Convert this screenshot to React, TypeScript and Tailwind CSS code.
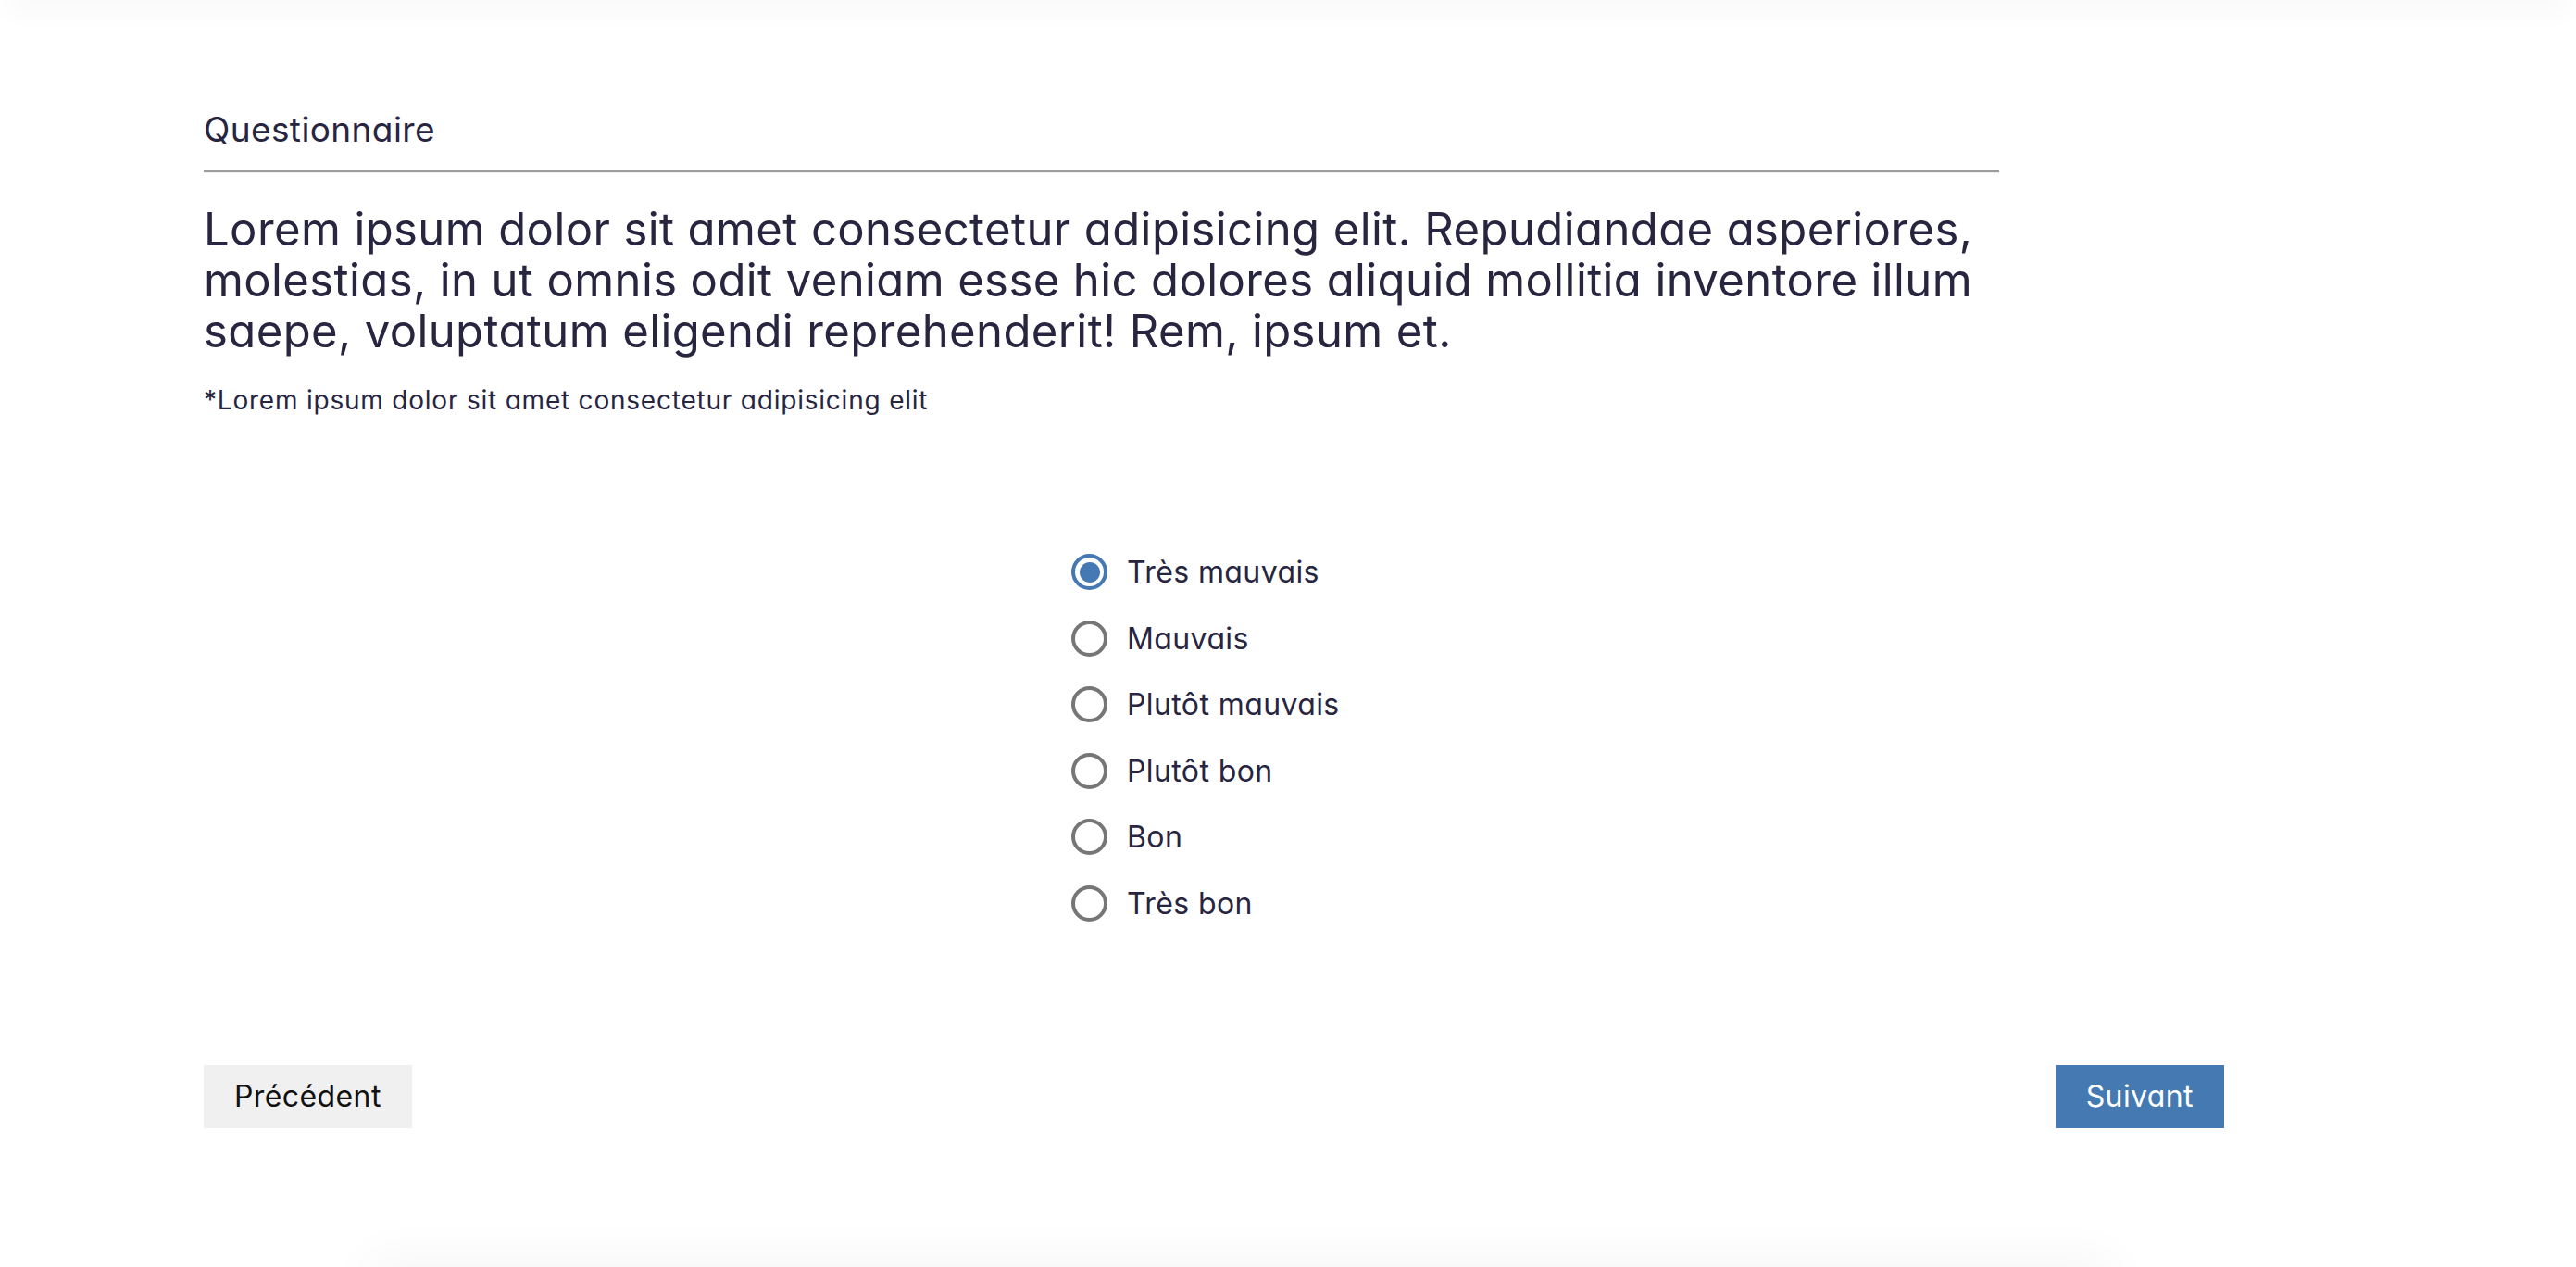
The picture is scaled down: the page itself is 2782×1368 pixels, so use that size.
import { useState } from "react";

const options = [
  "Très mauvais",
  "Mauvais",
  "Plutôt mauvais",
  "Plutôt bon",
  "Bon",
  "Très bon",
];

function Radio({ checked }: { checked: boolean }) {
  return (
    <span
      className={`flex h-[39px] w-[39px] shrink-0 items-center justify-center rounded-full border-[4px] ${
        checked ? "border-[#4479b3]" : "border-[#767676]"
      }`}
    >
      {checked && <span className="h-[22px] w-[22px] rounded-full bg-[#4479b3]" />}
    </span>
  );
}

export default function App() {
  const [answer, setAnswer] = useState(0);

  return (
    <div className="min-h-screen overflow-hidden bg-white font-['Inter','Liberation_Sans',sans-serif] tracking-wide text-[#27253f] [font-feature-settings:'cv11']">
      <div className="mx-[20px] h-0 shadow-[0_0_30px_12px_rgba(0,0,0,0.035)]" />

      <main className="pl-[220px] pr-[380px]">
        <section className="w-[1939px]">
          <h1 className="mt-[118px] text-[37px] leading-[44px]">Questionnaire</h1>
          <div className="mt-[22px] h-[2px] bg-[#9c9c9c]" />
          <div className="h-px bg-[#efefef]" />
          <p className="mt-[33px] text-[49px] leading-[55px]">
            Lorem ipsum dolor sit amet consectetur adipisicing elit. Repudiandae asperiores,
            molestias, in ut omnis odit veniam esse hic dolores aliquid mollitia inventore illum
            saepe, voluptatum eligendi reprehenderit! Rem, ipsum et.
          </p>
          <p className="mt-[29px] text-[28px] leading-[36px] tracking-[0.028em]">
            *Lorem ipsum dolor sit amet consectetur adipisicing elit
          </p>
        </section>

        <ul className="ml-[937px] mt-[148px] flex flex-col gap-[32.6px]">
          {options.map((label, i) => (
            <li key={label}>
              <button
                type="button"
                className="flex items-center gap-[21px]"
                onClick={() => setAnswer(i)}
              >
                <Radio checked={answer === i} />
                <span className="text-[32px] leading-[39px]">{label}</span>
              </button>
            </li>
          ))}
        </ul>

        <div className="mt-[155px] flex justify-between">
          <button
            type="button"
            className="h-[68px] bg-[#f0f0f0] px-[33px] text-[32px] text-[#111]"
          >
            Précédent
          </button>
          <button
            type="button"
            className="h-[68px] bg-[#4479b2] px-[33px] text-[32px] text-white"
          >
            Suivant
          </button>
        </div>
      </main>

      <div className="ml-[408px] mt-[150px] h-[200px] w-[1863px] bg-white shadow-[0_0_50px_10px_rgba(0,0,0,0.04)]" />
    </div>
  );
}
